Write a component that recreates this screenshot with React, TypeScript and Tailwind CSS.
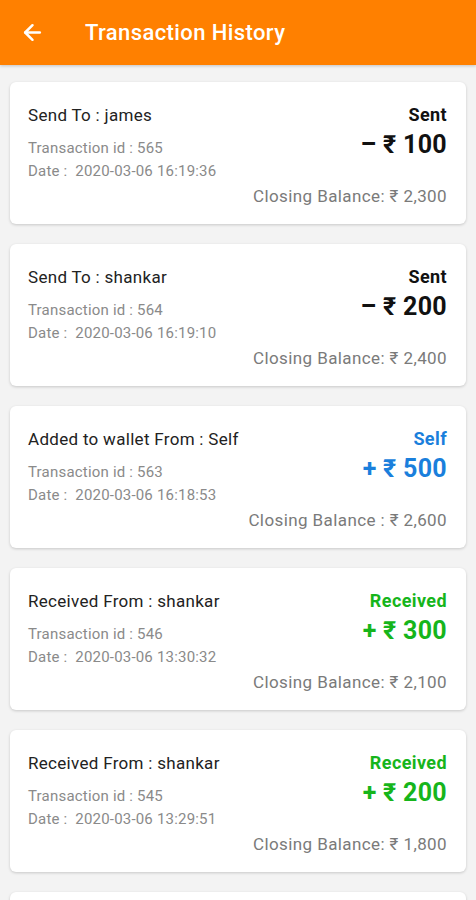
import { ArrowLeft } from "lucide-react";

interface Txn {
  title: string;
  id: number;
  date: string;
  label: string;
  amount: string;
  balance: string;
  kind: "sent" | "self" | "received";
}

const txns: Txn[] = [
  { title: "Send To : james", id: 565, date: "2020-03-06 16:19:36", label: "Sent", amount: "– ₹ 100", balance: "Closing Balance: ₹ 2,300", kind: "sent" },
  { title: "Send To : shankar", id: 564, date: "2020-03-06 16:19:10", label: "Sent", amount: "– ₹ 200", balance: "Closing Balance: ₹ 2,400", kind: "sent" },
  { title: "Added to wallet From : Self", id: 563, date: "2020-03-06 16:18:53", label: "Self", amount: "+ ₹ 500", balance: "Closing Balance : ₹ 2,600", kind: "self" },
  { title: "Received From : shankar", id: 546, date: "2020-03-06 13:30:32", label: "Received", amount: "+ ₹ 300", balance: "Closing Balance: ₹ 2,100", kind: "received" },
  { title: "Received From : shankar", id: 545, date: "2020-03-06 13:29:51", label: "Received", amount: "+ ₹ 200", balance: "Closing Balance: ₹ 1,800", kind: "received" },
];

const kindColor = {
  sent: "text-[#111111]",
  self: "text-[#1a7fdc]",
  received: "text-[#16b51b]",
};

function TxnCard({ t }: { t: Txn }) {
  return (
    <div className="rounded-[6px] bg-white pl-[18px] pr-[19px] pt-[23px] pb-[17px] shadow-[0_1px_3px_rgba(0,0,0,0.18)]">
      <div className="flex justify-between">
        <div>
          <div className="text-[17px] leading-[20px] tracking-[0.3px] text-[#222]">{t.title}</div>
          <div className="mt-[13px] text-[15px] leading-[20px] tracking-[0.2px] text-[#8a8a8a]">
            Transaction id : {t.id}
          </div>
          <div className="mt-[3px] whitespace-pre text-[15px] leading-[20px] tracking-[0.2px] text-[#8a8a8a]">
            {"Date :  " + t.date}
          </div>
        </div>
        <div className="flex flex-col items-end">
          <div className={`text-[18px] font-bold leading-[20px] tracking-[0.4px] ${kindColor[t.kind]}`}>{t.label}</div>
          <div className={`mt-[5px] text-[25px] font-bold leading-[30px] tracking-[0.3px] ${kindColor[t.kind]}`}>{t.amount}</div>
        </div>
      </div>
      <div className="mt-[4px] text-right text-[17px] leading-[22px] tracking-[0.4px] text-[#7a7a7a]">{t.balance}</div>
    </div>
  );
}

export default function App() {
  return (
    <div className="h-[900px] overflow-hidden bg-[#f3f3f3] font-['Roboto',sans-serif]">
      <div className="flex h-[65px] items-center bg-[#ff8000] shadow-[0_1px_3px_rgba(0,0,0,0.2)]">
        <ArrowLeft className="ml-[20px] text-white" size={25} strokeWidth={2.4} />
        <div className="ml-[40px] text-[22px] font-medium tracking-[0.4px] text-white">Transaction History</div>
      </div>
      <div className="flex flex-col gap-[20px] px-[10px] pt-[17px]">
        {txns.map((t) => (
          <TxnCard key={t.id} t={t} />
        ))}
        <div className="h-[142px] rounded-[6px] bg-white shadow-[0_1px_3px_rgba(0,0,0,0.18)]" />
      </div>
    </div>
  );
}
